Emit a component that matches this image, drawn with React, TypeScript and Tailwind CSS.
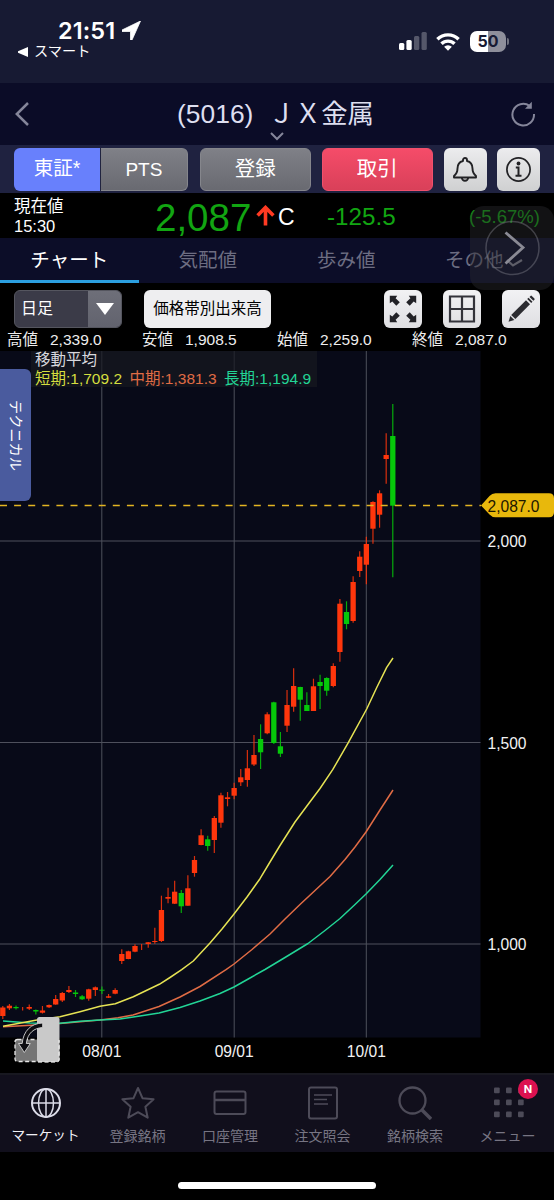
import type { ReactNode } from "react";
import { clsx } from "clsx";

type Candle = [high: number, low: number, top: number, bottom: number, down?: 1];

const FIRST_X = 2.8;
const STEP = 6.61;

// one entry per trading day, in chart coordinates
const candles: Candle[] = [
  [1006, 1019, 1007.5, 1016],
  [1004, 1010, 1005.7, 1008.3],
  [1005.5, 1009.5, 1007, 1008.2, 1],
  [1007, 1010.5, 1008.5, 1008.5],
  [1004.5, 1010, 1007, 1008.7],
  [1009.5, 1014.5, 1010, 1011.5, 1],
  [1006, 1013.5, 1010.5, 1012.7],
  [1004.5, 1008, 1005, 1007.3],
  [995, 1004.7, 999, 1004.5],
  [992, 1002, 993, 1000.5],
  [986, 993, 990, 992],
  [990, 997, 992.5, 994, 1],
  [995, 1000, 996.3, 999.3, 1],
  [988.7, 1000.7, 989.3, 998.7],
  [986.5, 996, 987.3, 990],
  [986.5, 994, 989.7, 990.7, 1],
  [994, 998, 996.3, 997.7],
  [988.3, 994.3, 990, 993.7],
  [949.3, 964, 954, 961],
  [950.7, 959.3, 951.3, 959],
  [944.3, 952.3, 946, 951.7],
  [944, 950, 945, 945],
  [942, 947.7, 942.3, 944],
  [927.7, 943.7, 941, 942],
  [895.7, 942, 910, 941],
  [887.7, 903.3, 897, 898.7],
  [880.7, 904, 891.7, 903.7],
  [890, 913, 893, 906.3, 1],
  [875.3, 905.7, 888.3, 905.7],
  [856, 876.7, 860, 873],
  [829.3, 845.3, 835.3, 845],
  [835.7, 850.7, 839.3, 846, 1],
  [816, 853, 818, 840],
  [792.7, 827.7, 795.3, 822.7],
  [792, 806.3, 797.3, 799],
  [782.7, 799.3, 788, 795.7],
  [769, 786, 777.3, 782.3],
  [750, 786.7, 768.3, 780],
  [735, 766, 755, 764.5],
  [724.3, 769, 739, 752.3, 1],
  [712.3, 734.3, 714.3, 733.3],
  [701.7, 744, 702.3, 743, 1],
  [732, 757, 746.3, 753.7, 1],
  [690, 732, 705, 725.7],
  [668.3, 711.7, 686, 706.7],
  [686.7, 720.7, 687, 699.7, 1],
  [692.3, 711, 705, 711, 1],
  [678.7, 711, 686.3, 711],
  [674.7, 709, 682, 686, 1],
  [677.3, 695.7, 678, 690.7, 1],
  [663.3, 687.3, 666, 686],
  [599, 661.7, 603.7, 652],
  [601.3, 629.3, 612, 624, 1],
  [576.3, 622.7, 582, 621],
  [551.3, 577, 556.7, 571],
  [536.7, 584.3, 544, 564.7],
  [501.3, 543.7, 502, 528.7],
  [490.3, 527.7, 493.3, 514.7],
  [433.3, 483.7, 455, 459],
  [404, 577.3, 436, 505.7, 1],
];

const averages = [
  {
    color: "#e06c45",
    points:
      "3,1026.8 36,1025 60,1023.5 100,1020 118,1017.8 133,1015 159,1006.5 180,997 200,986.5 226,969.7 234,964 252,949.5 270,934 285,919 300,904.5 315,890.5 330,876.5 345,859.5 355,847 366,832 380,810 393,790",
  },
  {
    color: "#22d596",
    points:
      "3,1021 30,1023 60,1023.3 80,1021.3 100,1020 120,1019 140,1016 159,1013 180,1007.5 200,1001 220,993.5 234,987 250,978 265,969.5 285,957.5 308,943.5 325,930.5 340,918.5 355,904.5 366,894 380,879.5 393,865",
  },
  {
    color: "#e6e354",
    points:
      "3,1026.3 37,1020 60,1016.7 80,1011.7 100,1006.3 115.3,1003.7 133.3,996.7 159.3,984.3 170,977.5 181.7,969.7 193.3,961 210,943 222,929 234,914 247,897 260,878.7 270,862 280,845.5 295,822 308,804.5 320,788.5 332.7,769.7 348.3,742.7 366.7,709 377,687 386.7,667.3 393,658",
  },
];

const priceLevels = [
  { y: 541, label: "2,000" },
  { y: 742.5, label: "1,500" },
  { y: 944, label: "1,000" },
];

const months = [
  { x: 101.8, label: "08/01" },
  { x: 234.2, label: "09/01" },
  { x: 366.3, label: "10/01" },
];

function StatusBar() {
  return (
    <div className="flex h-[83px] justify-between bg-[#171a33] pt-[18px] text-white">
      <div className="pl-[18px]">
        <div className="flex h-[25px] items-center gap-[5px] pl-10">
          <span className="w-[59px] font-['Inter',sans-serif] text-[23.500px] font-semibold tracking-[0.1px]">21:51</span>
          <svg className="h-[19px] w-[19px]" viewBox="0 0 19 19" fill="currentColor">
            <path d="M18.500 0 0 9v1.500h8.500V19H10Z" stroke="currentColor" strokeWidth=".8" strokeLinejoin="round" />
          </svg>
        </div>
        <div className="flex h-[18px] items-center gap-[6px]">
          <svg className="h-[10px] w-[10px]" viewBox="0 0 10 10" fill="currentColor">
            <path d="M10 0v10L0 5.700V4.300Z" />
          </svg>
          <span className="text-[14.200px]">スマート</span>
        </div>
      </div>
      <div className="mt-[13px] flex h-5 items-center pr-[45px]">
        <svg className="h-5 w-[28px]" viewBox="0 0 28 20" fill="currentColor">
          <rect x="0" y="12" width="5.300" height="7" rx="1.500" />
          <rect x="7.400" y="9" width="5.300" height="10" rx="1.500" />
          <rect x="15" y="5" width="5.300" height="14" rx="1.500" opacity=".27" />
          <rect x="22.500" y="1" width="5.300" height="18" rx="1.500" opacity=".27" />
        </svg>
        <svg className="ml-[9px] h-[19px] w-6" viewBox="0 0 24 19" fill="none" stroke="currentColor" strokeWidth="3.400">
          <path d="M1.400 7.300a15 15 0 0 1 21.200 0" />
          <path d="M5.500 11.800a9.200 9.200 0 0 1 13 0" />
          <path d="m12 18.700-3.900-3.900a5.500 5.500 0 0 1 7.800 0Z" fill="currentColor" stroke="none" />
        </svg>
        <div className="ml-[10px] flex h-[21px] w-9 items-center justify-center rounded-[7px] bg-linear-to-r from-white from-50% to-[#8e8f9b] to-50% font-['Inter',sans-serif] text-[16px] font-bold text-[#171a33]">
          50
        </div>
        <div className="ml-px h-[7px] w-[2px] rounded-r-full bg-[#6f717f]" />
      </div>
    </div>
  );
}

function TitleBar() {
  return (
    <div className="relative flex h-[62px] items-center justify-between bg-[#0b0c27] pl-[15px] pr-[18px] text-[#dedff0]">
      <svg className="h-6 w-[14px]" viewBox="0 0 14 24" fill="none" stroke="#85869a" strokeWidth="2.500">
        <path d="M13 1 1.800 12 13 23" />
      </svg>
      <h1 className="flex pl-[11px] text-[26.400px] leading-none whitespace-nowrap">
        <span>(5016)</span>
        <span className="ml-[15px]">ＪＸ金属</span>
      </h1>
      <svg className="h-[26px] w-[25px]" viewBox="0 0 25 26" fill="none" stroke="#85869a" strokeWidth="2">
        <path d="M18.600 4.900A10.800 10.800 0 1 0 23 13" />
        <path d="M20.800.800v7H14Z" fill="#85869a" stroke="none" />
      </svg>
      <svg className="absolute left-[270px] top-[49px] h-[9px] w-[14px]" viewBox="0 0 14 9" fill="none" stroke="#85869a" strokeWidth="2">
        <path d="m1 1 6 6 6-6" />
      </svg>
    </div>
  );
}

function MarketButtons() {
  return (
    <div className="flex h-12 items-center bg-[#1f2240] px-[14px] text-[20.500px] leading-none text-white">
      <button className="h-[43px] w-[87px] rounded-l-md border-r border-[#20233f] bg-[#6880fc] text-[19.500px]">東証*</button>
      <button className="h-[43px] w-[87px] rounded-r-md border border-l-0 border-[#85868c] bg-linear-to-b from-[#7f8087] to-[#696a71] text-[19px]">
        PTS
      </button>
      <button className="ml-[12px] h-[43px] w-[111px] rounded-md border border-[#85868c] bg-linear-to-b from-[#7f8087] to-[#696a71]">
        登録
      </button>
      <button className="ml-[11px] h-[43px] w-[111px] rounded-md border border-[#f0506c] bg-linear-to-b from-[#f54c69] to-[#d94059]">
        取引
      </button>
      <button className="ml-[11px] flex h-[43px] w-[43px] items-center justify-center rounded-md bg-linear-to-b from-[#ececee] to-[#cfd0d1]">
        <svg className="h-[25px] w-6" viewBox="0 0 24 25" fill="none" stroke="#222225" strokeWidth="1.900">
          <path d="M10 4V3a2 2 0 0 1 4 0v1c4 1 5.500 4 5.500 7.500 0 4 1.300 5.700 3.500 7.500v1.500H1V19c2.200-1.800 3.500-3.500 3.500-7.500C4.500 8 6 5 10 4Z" strokeLinejoin="round" />
          <path d="M8.800 20.500a3.200 3.200 0 0 0 6.400 0" />
        </svg>
      </button>
      <button className="ml-[10.500px] flex h-[43px] w-[43px] items-center justify-center rounded-md bg-linear-to-b from-[#ececee] to-[#cfd0d1]">
        <svg className="h-[25px] w-[25px]" viewBox="0 0 25 25" fill="none" stroke="#222225" strokeWidth="1.700">
          <circle cx="12.500" cy="12.500" r="11.600" />
          <circle cx="12.500" cy="6.500" r="1.900" fill="#222225" stroke="none" />
          <path d="M9.800 10.500h2.700v8M9.500 18.800h6" strokeWidth="2" />
        </svg>
      </button>
    </div>
  );
}

function PriceRow() {
  return (
    <div className="flex h-[45px] items-center bg-black leading-none text-white">
      <div className="w-[141px] pl-[14px] text-[16.500px] leading-[20px]">
        <div>現在値</div>
        <div>15:30</div>
      </div>
      <div className="w-[115px] pt-[5px] pl-[14px] text-[38.500px] text-[#12a512]">2,087</div>
      <svg className="h-[21px] w-[19px]" viewBox="0 0 19 21" fill="none" stroke="#ff3a22" strokeWidth="3.600">
        <path d="M9.500 20.500V3M1.600 10.500l7.900-8 7.900 8" />
      </svg>
      <span className="ml-[3px] w-[49px] pt-[3px] text-[23px]">C</span>
      <span className="w-[142px] pt-[3px] text-[24.200px] text-[#12a512]">-125.5</span>
      <span className="pt-[3px] text-[18.500px] text-[#12a512]">(-5.67%)</span>
    </div>
  );
}

function Tabs() {
  const tabs = ["チャート", "気配値", "歩み値", "その他"];
  return (
    <div className="grid h-[45px] grid-cols-4 bg-[#0c0d28] text-[19.500px] leading-none">
      {tabs.map((tab, i) => (
        <div
          key={tab}
          className={clsx(
            "flex items-center justify-center border-b-[3px]",
            i === 0 ? "border-[#2b9fe0] text-white" : "border-[#0c0d28] text-[#6d6d82]"
          )}
        >
          <span className="pt-[3px]">{tab}</span>
          {i === 3 && (
            <svg className="mt-2 h-2 w-[21px]" viewBox="0 0 21 8" fill="none" stroke="#8a8a9a" strokeWidth="2.200">
              <path d="m3 1 6 5.500L18 1" />
            </svg>
          )}
        </div>
      ))}
    </div>
  );
}

function NextOverlay() {
  return (
    <div className="absolute left-[470px] top-[206px] flex h-[84px] w-[84px] items-center justify-center rounded-[14px] bg-[#28282c]/45">
      <svg className="h-14 w-14" viewBox="0 0 56 56" fill="none" stroke="#8a8a94">
        <circle cx="28.500" cy="28" r="26.500" strokeWidth="1.500" opacity=".4" />
        <path d="m21.500 12.500 17.500 15-17.500 16" strokeWidth="2.800" />
      </svg>
    </div>
  );
}

function IconButton({ children }: { children: ReactNode }) {
  return (
    <button className="flex h-[38px] w-[38px] items-center justify-center rounded-md bg-linear-to-b from-[#f2f2f4] to-[#dfdfe2]">
      {children}
    </button>
  );
}

function Toolbar() {
  return (
    <div className="flex h-[46px] items-center px-[14px] pt-[6px]">
      <div className="flex h-[38px] w-[108px] overflow-hidden rounded-md border border-[#55565f] bg-[#3b3b48]">
        <span className="flex w-[73px] items-center pl-[6px] text-[16px] text-white">日足</span>
        <span className="flex flex-1 items-center justify-center bg-linear-to-b from-[#6e6f79] to-[#62636e]">
          <svg className="h-3 w-[18px]" viewBox="0 0 18 12" fill="#fff">
            <path d="M0 0h18L9 12Z" />
          </svg>
        </span>
      </div>
      <button className="ml-[22px] h-[38px] w-[127px] rounded-md bg-[#eeeef0] text-[15.500px] whitespace-nowrap text-black">
        価格帯別出来高
      </button>
      <div className="ml-auto flex gap-[21px]">
        <IconButton>
          <svg className="h-7 w-7" viewBox="0 0 28 28" fill="#222227">
            {[0, 90, 180, 270].map((angle) => (
              <path key={angle} d="M.8.800H8.200L6.600 3.300l4.200 4-3.500 3.500-4-4.200L.8 8.200Z" transform={`rotate(${angle} 14 14)`} />
            ))}
          </svg>
        </IconButton>
        <IconButton>
          <svg className="h-7 w-7" viewBox="0 0 28 28" fill="none" stroke="#33333a" strokeWidth="2.200">
            <path d="M2 1.500h24v25H2ZM14 1.500v25M2 14h24" />
          </svg>
        </IconButton>
        <IconButton>
          <svg className="h-7 w-7" viewBox="0 0 28 28" fill="#2c2c31">
            <path d="M1.500 26.800 3.300 21l4 4Z" />
            <path d="M4.200 20 19 5.300l4 4L8.400 24Z" />
            <path d="m20.200 4.100 1.300-1.300 4 4-1.300 1.300ZM22.500 1.900l1-1q.7-.6 1.300 0l2.600 2.600q.6.700 0 1.300l-1 1Z" />
          </svg>
        </IconButton>
      </div>
    </div>
  );
}

function Ohlc() {
  return (
    <div className="flex h-[22px] items-center pl-[7px] text-[15.500px] leading-none text-[#eeeeee]">
      <span className="w-[43px]">高値</span>
      <span className="w-[92px]">2,339.0</span>
      <span className="w-[43px]">安値</span>
      <span className="w-[92px]">1,908.5</span>
      <span className="w-[43px]">始値</span>
      <span className="w-[92px]">2,259.0</span>
      <span className="w-[43px]">終値</span>
      <span>2,087.0</span>
    </div>
  );
}

function Chart() {
  return (
    <div className="relative h-[722px]">
      <svg
        className="block h-[722px] w-[554px] font-['Liberation_Sans',sans-serif]"
        viewBox="0 351 554 722"
        fill="none"
      >
        <rect x="0" y="351" width="480.500" height="686.500" fill="#080a18" />
        {priceLevels.map(({ y, label }) => (
          <g key={label}>
            <path d={`M0 ${y}H480.500`} stroke="#4e505c" />
            <text x="487.500" y={y + 6} fill="#f2f2f2" fontSize="15.600">
              {label}
            </text>
          </g>
        ))}
        {months.map(({ x, label }) => (
          <g key={label}>
            <path d={`M${x} 351V1037.500`} stroke="#4e505c" />
            <text x={x} y="1057.300" textAnchor="middle" fill="#f2f2f2" fontSize="15.600">
              {label}
            </text>
          </g>
        ))}
        {candles.map(([high, low, top, bottom, down], i) => {
          const x = FIRST_X + i * STEP;
          const color = down ? "#06c80a" : "#ff360c";
          return (
            <g key={i} fill={color} stroke={color}>
              <path d={`M${x} ${high}V${low}`} strokeWidth="1.200" opacity=".85" />
              <rect x={x - 2.65} y={top} width={bottom > top ? 5.3 : 0} height={bottom - top} stroke="none" />
            </g>
          );
        })}
        {averages.map(({ color, points }) => (
          <polyline key={color} points={points} stroke={color} strokeWidth="1.500" strokeLinejoin="round" />
        ))}
        <path d="M0 505.500H481" stroke="#e3b522" strokeWidth="1.500" strokeDasharray="7 7.100" />
        <path d="M481 505.500 489.500 496q2.500-2.800 6-2.800H549q5 0 5 5V512.200q0 5-5 5H495.500q-3.500 0-6-2.800Z" fill="#e8b80c" />
        <text x="487.500" y="511.800" fill="#1d1700" fontSize="15.600">
          2,087.0
        </text>
      </svg>

      <div className="absolute left-[31px] top-0 h-[36px] w-[286px] bg-[#17181f]/70 pl-[4px] text-[15.500px] leading-[18.500px] whitespace-nowrap text-[#d8d8de]">
        <div>移動平均</div>
        <div className="flex gap-[7.500px]">
          <span className="text-[#d5de3f]">短期:1,709.2</span>
          <span className="text-[#e06c45]">中期:1,381.3</span>
          <span className="text-[#22d596]">長期:1,194.9</span>
        </div>
      </div>

      <div className="absolute left-0 top-[18px] flex h-[132px] w-[31px] items-center justify-center rounded-r-md bg-[#4a5b9e] text-[14.200px] text-white [writing-mode:vertical-rl]">
        <span className="[text-orientation:sideways]">テクニカル</span>
      </div>

      {/* rotate-screen handle */}
      <svg className="absolute left-[14px] top-[665px] h-[48px] w-[47px]" viewBox="0 0 47 48" fill="none">
        <rect x="1" y="23.500" width="44" height="22" rx="2.500" fill="#757575" stroke="#e6e6e6" strokeWidth="1.300" strokeDasharray="4 2.500" />
        <rect x="23" y="1" width="22.500" height="45" rx="2.500" fill="#c9c9c9" />
        <path d="M24 46h18.500q2.500 0 2.500-2.500V24" stroke="#eeeeee" strokeDasharray="4 2.500" />
        <path d="M28.700 7v4.500C20 12 13.500 17 12.300 27.500h4L10.300 36.500 4.500 27.500h3.700C9.300 15 17 7.300 28.700 7Z" fill="#0c0c10" stroke="#d5d5d5" strokeWidth=".9" />
      </svg>
    </div>
  );
}

function NavItem({ label, active, children }: { label: string; active?: boolean; children: ReactNode }) {
  return (
    <div className={clsx("flex flex-col items-center pt-[11px]", active ? "text-[#dcdce8]" : "text-[#4d4b58]")}>
      <svg className="h-[34px] w-[34px]" viewBox="0 0 34 34" fill="none" stroke="currentColor" strokeWidth="2">
        {children}
      </svg>
      <span
        className={clsx(
          "mt-[6px] leading-[20px] whitespace-nowrap",
          active ? "text-[13.600px] text-[#f0f0f6]" : "text-[14px] text-[#777583]"
        )}
      >
        {label}
      </span>
    </div>
  );
}

function BottomNav() {
  return (
    <div className="grid h-[79px] grid-cols-[91px_93px_92px_93px_92px_93px] border-t-2 border-[#181820] bg-[#110f1c]">
      <NavItem label="マーケット" active>
        <circle cx="17" cy="17" r="14" strokeWidth="2" />
        <path d="M17 3v28M3 17h28" strokeWidth="1.500" />
        <ellipse cx="17" cy="17" rx="7.500" ry="14" strokeWidth="1.500" />
      </NavItem>
      <NavItem label="登録銘柄">
        <path d="m17 2 4.600 10.300 11 .9-8.200 7.500 2.300 11L17 26.200l-9.700 5.500 2.300-11-8.200-7.500 11-.9Z" strokeLinejoin="round" />
      </NavItem>
      <NavItem label="口座管理">
        <rect x="1.500" y="5.500" width="31" height="22.500" rx="2" />
        <path d="M1.500 14h31" strokeWidth="2.500" />
      </NavItem>
      <NavItem label="注文照会">
        <rect x="3" y="1.500" width="28" height="31" rx="2" />
        <path d="M8 9h18M8 13.500h13M8 18h14" strokeWidth="1.500" />
      </NavItem>
      <NavItem label="銘柄検索">
        <circle cx="14.500" cy="14.500" r="13" strokeWidth="2.300" />
        <path d="m24 24 9 9" strokeWidth="3.500" />
      </NavItem>
      <NavItem label="メニュー">
        {[1.5, 13.5, 25.5].flatMap((y) =>
          [3, 15, 27].map((x) => (
            <rect key={`${x}-${y}`} x={x} y={y} width="5.700" height="5.700" rx="1" fill="currentColor" stroke="none" />
          ))
        )}
      </NavItem>
    </div>
  );
}

export default function App() {
  return (
    <div className="relative h-[1200px] w-[554px] overflow-hidden bg-black font-['Liberation_Sans','Noto_Sans_CJK_JP',sans-serif]">
      <StatusBar />
      <TitleBar />
      <MarketButtons />
      <PriceRow />
      <Tabs />
      <Toolbar />
      <Ohlc />
      <Chart />
      <BottomNav />
      <div className="mx-auto mt-[30px] h-[7px] w-[198px] rounded-full bg-white" />
      <NextOverlay />
      <div className="absolute left-[518px] top-[1079px] flex h-5 w-5 items-center justify-center rounded-full bg-[#dc1150] font-['Inter',sans-serif] text-[11px] font-bold text-white">
        N
      </div>
    </div>
  );
}
